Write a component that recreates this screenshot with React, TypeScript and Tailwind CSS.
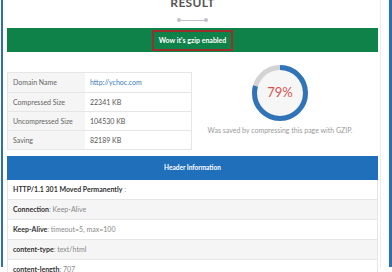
import React from 'react';

const rows = [
  { label: 'Domain Name', value: 'http://ychoc.com', link: true },
  { label: 'Compressed Size', value: '22341 KB' },
  { label: 'Uncompressed Size', value: '104530 KB' },
  { label: 'Saving', value: '82189 KB' },
];

const headers = [
  { key: 'HTTP/1.1 301 Moved Permanently', value: ' :', keyOnly: true },
  { key: 'Connection', value: 'Keep-Alive' },
  { key: 'Keep-Alive', value: 'timeout=5, max=100' },
  { key: 'content-type', value: 'text/html' },
  { key: 'content-length', value: '707' },
];

function Gauge({ percent }: { percent: number }) {
  const r = 25.5;
  const c = 2 * Math.PI * r;
  return (
    <div className="relative w-[56px] h-[56px]">
      <svg width="56" height="56" viewBox="0 0 56 56" className="-rotate-90">
        <circle cx="28" cy="28" r={r} fill="#f6f6f6" stroke="#d3d3d3" strokeWidth="5" />
        <circle
          cx="28"
          cy="28"
          r={r}
          fill="none"
          stroke="#2f74b9"
          strokeWidth="5"
          strokeDasharray={`${(c * percent) / 100} ${c}`}
        />
      </svg>
      <div className="absolute inset-0 flex items-center justify-center text-[13px] text-[#d9534f]">
        {percent}%
      </div>
    </div>
  );
}

export default function App() {
  return (
    <div className="w-[392px] h-[272px] overflow-hidden bg-white pl-[1px] font-['Lato','Open_Sans',sans-serif]">
      <div className="h-full border-l-[2px] border-r-[3px] border-[#2d6fb3] pl-[4px] pr-[8px]">
        <div className="h-full border-r border-[#ececec] pr-[2px]">
          <h2 className="-mt-[5px] text-center text-[12px] leading-[16px] font-bold tracking-wide text-[#555]">RESULT</h2>

          <div className="mt-[7px] flex items-center justify-center">
            <span className="w-[4px] h-[4px] rounded-full bg-[#c5bfcc]" />
            <span className="w-[23px] h-[1px] bg-[#c5bfcc]" />
            <span className="w-[4px] h-[4px] rounded-full bg-[#c5bfcc]" />
          </div>

          <div className="mt-[6px] h-[24px] bg-[#0f824a] flex items-center justify-center">
            <div className="h-[21px] px-[5px] border-2 border-[#9a2f2c] flex items-center text-[7px] font-bold text-white">
              Wow it's gzip enabled
            </div>
          </div>

          <div className="mt-[20px] flex">
            <div className="w-[185px] border border-[#e6e6e6]">
              {rows.map((r, i) => (
                <div key={r.label} className={`flex h-[19px] ${i > 0 ? 'border-t border-[#e6e6e6]' : ''}`}>
                  <div className="w-[77px] bg-[#f5f5f5] pl-[5px] flex items-center text-[7px] text-[#666]">{r.label}</div>
                  <div className={`flex-1 pl-[5px] flex items-center text-[7px] ${r.link ? 'text-[#3b78b4]' : 'text-[#555]'}`}>
                    {r.value}
                  </div>
                </div>
              ))}
            </div>
            <div className="flex-1 flex flex-col items-center -mt-[7px] pr-[10px]">
              <Gauge percent={79} />
              <p className="mt-[4px] text-[7px] leading-[10px] text-[#999]">Was saved by compressing this page with GZIP.</p>
            </div>
          </div>

          <div className="mt-[6px] h-[24px] bg-[#1f6fbb] flex items-center justify-center text-[6.5px] font-bold text-white">
            Header Information
          </div>
          <div className="border-x border-[#e6e6e6]">
            {headers.map((h, i) => (
              <div
                key={h.key}
                className={`h-[20px] flex items-center pl-[5px] border-b border-[#e6e6e6] text-[7px] ${i % 2 === 1 ? 'bg-[#f5f5f5]' : 'bg-white'}`}
              >
                <span className="font-bold text-[#333]">{h.key}</span>
                {h.keyOnly ? (
                  <span className="text-[#999]">&nbsp;:</span>
                ) : (
                  <span className="text-[#888]">: {h.value}</span>
                )}
              </div>
            ))}
          </div>
        </div>
      </div>
    </div>
  );
}
